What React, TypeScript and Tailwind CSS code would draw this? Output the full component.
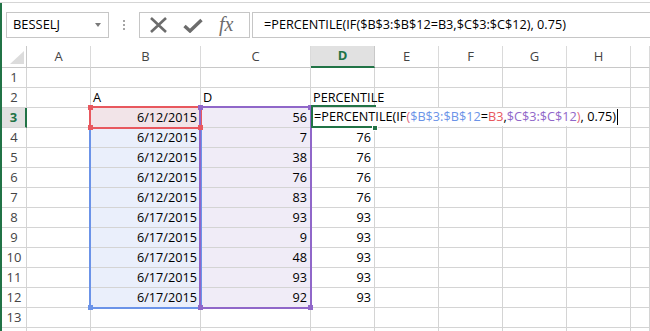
import React from 'react';

const COLS = ['A', 'B', 'C', 'D', 'E', 'F', 'G', 'H', ''];

const dates = [
  '6/12/2015', '6/12/2015', '6/12/2015', '6/12/2015', '6/12/2015',
  '6/17/2015', '6/17/2015', '6/17/2015', '6/17/2015', '6/17/2015',
];
const values = [56, 7, 38, 76, 83, 93, 9, 48, 93, 92];
const pct = [null, 76, 76, 76, 76, 93, 93, 93, 93, 93];

// range colours used by the formula editor
const BLUE = '#6b93e8';
const RED = '#e8585e';
const PURPLE = '#9067c9';
const GREEN = '#217346';

function Handle({ x, y, color }: { x: number; y: number; color: string }) {
  // x / y are the corner coordinates inside the grid
  return (
    <div
      className="absolute w-[5px] h-[5px]"
      style={{ left: x - 2, top: y - 2, background: color }}
    />
  );
}

function FormulaBar() {
  return (
    <div className="flex items-stretch h-[26px] mt-[8px]">
      {/* name box */}
      <div className="ml-[4px] w-[103px] border border-[#c6c6c6] flex items-center justify-between pl-[6px] pr-[7px]">
        <span className="text-[12.9px] text-black">BESSELJ</span>
        <span className="w-0 h-0 border-l-[3px] border-r-[3px] border-t-[4px] border-l-transparent border-r-transparent border-t-[#7a7a7a]" />
      </div>
      {/* grip */}
      <div className="w-[30px] flex flex-col items-center justify-center gap-[2px]">
        <span className="w-[2px] h-[2px] bg-[#a6a6a6]" />
        <span className="w-[2px] h-[2px] bg-[#a6a6a6]" />
        <span className="w-[2px] h-[2px] bg-[#a6a6a6]" />
      </div>
      {/* cancel / enter / fx */}
      <div className="w-[111px] border border-[#c6c6c6] flex items-center pl-[9px] gap-[15px]">
        <svg width="19" height="16" viewBox="0 0 19 16">
          <path d="M2 1 L17 15 M17 1 L2 15" stroke="#6c6c6c" strokeWidth="2.6" fill="none" />
        </svg>
        <svg width="20" height="15" viewBox="0 0 20 15">
          <path d="M1.5 8 L7 13 L18.5 2" stroke="#6c6c6c" strokeWidth="3.4" fill="none" strokeLinejoin="miter" />
        </svg>
        <span className="font-['Liberation_Serif'] italic text-[20px] leading-none text-[#6c6c6c] ml-[1px] -mt-[2px]">
          fx
        </span>
      </div>
      {/* formula text */}
      <div className="flex-1 ml-[2px] border-t border-b border-l border-[#c6c6c6] flex items-center pl-[11px]">
        <span className="text-[12.7px] text-black whitespace-nowrap">
          =PERCENTILE(IF($B$3:$B$12=B3,$C$3:$C$12), 0.75)
        </span>
      </div>
    </div>
  );
}

function Sheet() {
  const rows = Array.from({ length: 14 }, (_, i) => i + 1);

  const cell = 'border-r border-b border-[#d4d4d4] flex items-center text-[12.7px] text-black whitespace-nowrap overflow-visible';

  return (
    <div className="relative">
      <div
        className="grid"
        style={{
          gridTemplateColumns: '25px 64px 110px 110px 64px 64px 64px 64px 64px 1fr',
          gridTemplateRows: '22px repeat(14, 20px)',
        }}
      >
        {/* header row */}
        <div className="border-r border-b border-[#c8c8c8] relative">
          <svg className="absolute left-[8px] top-[5px]" width="15" height="14" viewBox="0 0 15 14">
            <polygon points="14,0 14,13 0,13" fill="#dcdcdc" />
          </svg>
        </div>
        {COLS.map((c, i) =>
          c === 'D' ? (
            <div
              key={i}
              className="bg-[#e1e1e1] border-r border-[#c8c8c8] border-b-2 border-b-[#217346] flex items-center justify-center text-[13px] font-bold text-[#217346]"
            >
              {c}
            </div>
          ) : (
            <div
              key={i}
              className="border-r border-b border-[#c8c8c8] border-r-[#dadada] flex items-center justify-center text-[13px] text-[#444]"
            >
              {c}
            </div>
          )
        )}

        {rows.map((r) => (
          <React.Fragment key={r}>
            {r === 3 ? (
              <div className="bg-[#e1e1e1] border-r-2 border-r-[#217346] border-b border-[#d4d4d4] flex items-center justify-center text-[13px] font-bold text-[#217346]">
                {r}
              </div>
            ) : (
              <div className="border-r border-b border-[#d4d4d4] flex items-center justify-center text-[13px] text-[#444]">
                {r < 14 ? r : ''}
              </div>
            )}
            {/* A */}
            <div className={cell} />
            {/* B */}
            <div
              className={`${cell} ${r === 2 ? 'pl-[2px]' : 'justify-end pr-[3px]'} ${
                r === 3 ? 'bg-[#f2e4e8]' : r > 3 && r <= 12 ? 'bg-[#eaeffb]' : ''
              }`}
            >
              {r === 2 ? 'A' : r >= 3 && r <= 12 ? dates[r - 3] : ''}
            </div>
            {/* C */}
            <div
              className={`${cell} ${r === 2 ? 'pl-[2px]' : 'justify-end pr-[3px]'} ${
                r >= 3 && r <= 12 ? 'bg-[#f0ecf7]' : ''
              }`}
            >
              {r === 2 ? 'D' : r >= 3 && r <= 12 ? values[r - 3] : ''}
            </div>
            {/* D */}
            <div className={`${cell} ${r === 2 ? 'pl-[2px]' : 'justify-end pr-[3px]'}`}>
              {r === 2 ? 'PERCENTILE' : r > 3 && r <= 12 ? pct[r - 3] : ''}
            </div>
            {['E', 'F', 'G', 'H', 'I'].map((c) => (
              <div key={c} className={cell} />
            ))}
          </React.Fragment>
        ))}
      </div>

      {/* reference range borders */}
      <div className="absolute left-[87px] top-[60px] w-[113px] h-[203px] border-2" style={{ borderColor: BLUE }} />
      <div className="absolute left-[87px] top-[60px] w-[113px] h-[23px] border-2" style={{ borderColor: RED }} />
      <div className="absolute left-[197px] top-[60px] w-[113px] h-[203px] border-2" style={{ borderColor: PURPLE }} />
      <Handle x={88} y={261} color={BLUE} />
      <Handle x={88} y={61} color={RED} />
      <Handle x={88} y={81} color={RED} />
      <Handle x={198} y={81} color={RED} />
      <Handle x={198} y={61} color={PURPLE} />
      <Handle x={308} y={61} color={PURPLE} />
      <Handle x={198} y={261} color={PURPLE} />
      <Handle x={308} y={261} color={PURPLE} />

      {/* in-cell editor */}
      <div className="absolute left-[311px] top-[62px] w-[310px] h-[18px] bg-white flex items-center pl-[1px] text-[12.7px] whitespace-nowrap">
        <span className="text-black">=PERCENTILE(IF</span>
        <span style={{ color: '#e36a7e' }}>(</span>
        <span style={{ color: BLUE }}>$B$3:$B$12</span>
        <span className="text-black">=</span>
        <span style={{ color: RED }}>B3</span>
        <span className="text-black">,</span>
        <span style={{ color: PURPLE }}>$C$3:$C$12</span>
        <span style={{ color: '#e36a7e' }}>)</span>
        <span className="text-black">, 0.75)</span>
        <span className="w-px h-[16px] bg-black ml-[1px]" />
      </div>
      {/* active cell outline, open on the right while editing */}
      <div className="absolute left-[309px] top-[59px] w-[65px] h-[23px] border-2 border-r-0" style={{ borderColor: GREEN }} />
      <div className="absolute left-[370px] top-[79px] w-[6px] h-[6px] bg-[#217346] border border-white" />
    </div>
  );
}

export default function App() {
  return (
    <div className="w-[650px] h-[331px] overflow-hidden bg-white font-['Open_Sans',sans-serif] relative">
      <div className="h-[2px]" />
      <div className="h-px bg-[#d5d5d5]" />
      <div className="border-l-2 border-[#217346] h-[328px] pt-[1px]">
        <FormulaBar />
        <div className="h-[8px]" />
        <Sheet />
      </div>
    </div>
  );
}
